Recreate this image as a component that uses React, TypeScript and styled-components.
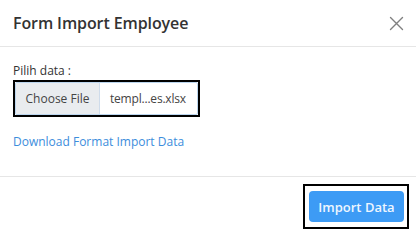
import styled, { createGlobalStyle } from 'styled-components';

const GlobalStyle = createGlobalStyle`
  html, body {
    margin: 0;
    padding: 0;
    background: #ffffff;
  }
  body {
    font-family: 'Open Sans', 'Noto Sans', sans-serif;
    color: #333333;
  }
`;

const Modal = styled.div`
  width: 416px;
  height: 232px;
  background: #ffffff;
  display: flex;
  flex-direction: column;
  overflow: hidden;
`;

const Header = styled.header`
  height: 47px;
  padding: 0 12px 0 13px;
  display: flex;
  align-items: center;
  justify-content: space-between;
  border-bottom: 1px solid #e6e6e6;
  box-sizing: border-box;
`;

const Title = styled.h1`
  margin: 0;
  font-size: 16px;
  font-weight: 600;
  color: #333333;
  letter-spacing: -0.1px;
`;

const CloseButton = styled.button`
  border: none;
  background: none;
  padding: 0;
  width: 16px;
  height: 16px;
  display: flex;
  align-items: center;
  justify-content: center;
  cursor: pointer;
`;

const Body = styled.div`
  padding: 16px 13px 0;
  height: 130px;
  box-sizing: border-box;
  border-bottom: 1px solid #e6e6e6;
`;

const Label = styled.div`
  font-size: 12px;
  line-height: 16px;
  color: #333333;
  margin-bottom: 1px;
`;

const Highlight = styled.div<{ $pad?: string }>`
  display: inline-flex;
  border: 2px solid #000000;
  padding: ${(p) => p.$pad || '0'};
`;

const FileField = styled.div`
  width: 183px;
  height: 33px;
  display: flex;
  box-sizing: border-box;
  border: 1px solid #bcd6ef;
  border-radius: 2px;
  overflow: hidden;
  font-size: 12px;
`;

const ChooseButton = styled.span`
  width: 83px;
  display: flex;
  align-items: center;
  justify-content: center;
  background: #e9ecef;
  border-right: 1px solid #cfdceb;
  color: #444444;
`;

const FileName = styled.span`
  flex: 1;
  display: flex;
  align-items: center;
  padding-left: 10px;
  color: #444444;
  letter-spacing: -0.2px;
`;

const DownloadLink = styled.a`
  display: block;
  margin-top: 17px;
  font-size: 12px;
  line-height: 16px;
  color: #3c8ddc;
  text-decoration: none;
`;

const Footer = styled.footer`
  display: flex;
  justify-content: flex-end;
  padding: 7px 7px 0;
`;

const PrimaryButton = styled.button`
  width: 95px;
  height: 31px;
  border: none;
  border-radius: 4px;
  background: #3d9bf5;
  color: #eef6ff;
  font-family: 'Open Sans', 'Noto Sans', sans-serif;
  font-size: 13px;
  font-weight: 600;
  cursor: pointer;
`;

function CloseIcon() {
  return (
    <svg width="15" height="15" viewBox="0 0 15 15" fill="none">
      <path d="M1.5 1.5L13.5 13.5M13.5 1.5L1.5 13.5" stroke="#808080" strokeWidth="1.4" strokeLinecap="round" />
    </svg>
  );
}

export default function App() {
  return (
    <>
      <GlobalStyle />
      <Modal>
        <Header>
          <Title>Form Import Employee</Title>
          <CloseButton aria-label="Close">
            <CloseIcon />
          </CloseButton>
        </Header>
        <Body>
          <Label>Pilih data :</Label>
          <Highlight>
            <FileField>
              <ChooseButton>Choose File</ChooseButton>
              <FileName>templ...es.xlsx</FileName>
            </FileField>
          </Highlight>
          <DownloadLink href="#">Download Format Import Data</DownloadLink>
        </Body>
        <Footer>
          <Highlight $pad="5px 3px 5px 4px">
            <PrimaryButton>Import Data</PrimaryButton>
          </Highlight>
        </Footer>
      </Modal>
    </>
  );
}
